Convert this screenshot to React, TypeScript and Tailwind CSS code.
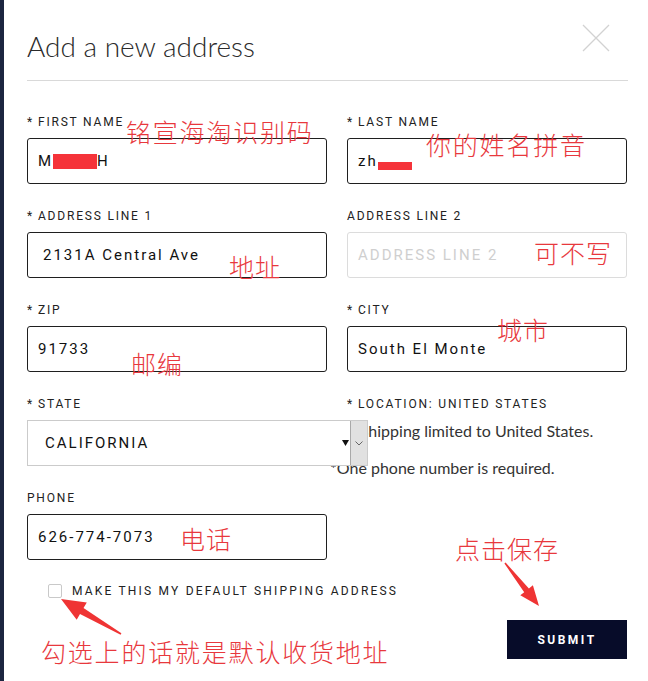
import type { ReactNode } from "react";

const labelCls =
  "h-[18px] mb-[7px] text-[12px] leading-[18px] tracking-[1.8px] text-[#222] whitespace-nowrap";
const boxCls =
  "h-[46px] border border-[#1f1f1f] rounded-[3px] flex items-center text-[15px] tracking-[2px] text-[#111] whitespace-nowrap";
const noteCls = "text-[16px] leading-[22px] text-[#333] whitespace-nowrap font-[family-name:Lato,sans-serif]";

const red = "#e8383d";

function Field({
  label,
  req,
  children,
  className = "",
}: {
  label: string;
  req?: boolean;
  children: ReactNode;
  className?: string;
}) {
  return (
    <div className={className}>
      <div className={labelCls}>
        {req && <span className="mr-[4px]">*</span>}
        {label}
      </div>
      {children}
    </div>
  );
}

// tapered arrow, tail -> tip
function arrow(tx: number, ty: number, px: number, py: number, headLen: number, headHalf: number, neck: number) {
  const len = Math.hypot(px - tx, py - ty);
  const dx = (px - tx) / len;
  const dy = (py - ty) / len;
  const nx = -dy;
  const ny = dx;
  const bx = px - dx * headLen;
  const by = py - dy * headLen;
  const pts = [
    [tx + nx * 0.8, ty + ny * 0.8],
    [bx + nx * neck, by + ny * neck],
    [bx + nx * headHalf, by + ny * headHalf],
    [px, py],
    [bx - nx * headHalf, by - ny * headHalf],
    [bx - nx * neck, by - ny * neck],
    [tx - nx * 0.8, ty - ny * 0.8],
  ];
  return pts.map((p) => p.map((v) => v.toFixed(1)).join(",")).join(" ");
}

const notes: { text: string; x: number; y: number; wide?: boolean }[] = [
  { text: "铭宣海淘识别码", x: 126, y: 119, wide: true },
  { text: "你的姓名拼音", x: 426, y: 132, wide: true },
  { text: "地址", x: 229, y: 254 },
  { text: "可不写", x: 534, y: 240 },
  { text: "城市", x: 497, y: 317 },
  { text: "邮编", x: 131, y: 351 },
  { text: "州省", x: 211, y: 433 },
  { text: "电话", x: 180, y: 526 },
  { text: "点击保存", x: 455, y: 536 },
  { text: "勾选上的话就是默认收货地址", x: 41, y: 639, wide: true },
];

export default function App() {
  return (
    <div className="relative w-[648px] h-[681px] overflow-hidden bg-white flex font-[family-name:Roboto,sans-serif]">
      <div className="w-[4px] shrink-0 bg-[#1c2540]" />
      <div className="flex-1 pl-[23px] pr-[21px]">
        {/* header */}
        <div className="flex justify-between items-start">
          <h1 className="pt-[29px] text-[28px] leading-[34px] font-light text-[#2b2b2b] font-[family-name:Lato,sans-serif]">
            Add a new address
          </h1>
          <svg className="mt-[24px] mr-[18px]" width="28" height="28" viewBox="0 0 28 28">
            <path d="M1 1 L27 27 M27 1 L1 27" stroke="#d2d2d2" strokeWidth="1.3" fill="none" />
          </svg>
        </div>
        <div className="mt-[17px] h-px w-[601px] bg-[#d9d9d9]" />

        <form className="mt-[32px] flex flex-col gap-[23px]">
          <div className="grid grid-cols-[300px_280px] gap-x-[20px]">
            <Field label="FIRST NAME" req>
              <div className={`${boxCls} pl-[10px]`}>
                M<span className="inline-block w-[44px] h-[15px] bg-[#f5333a] align-[-2px]" />H
              </div>
            </Field>
            <Field label="LAST NAME" req>
              <div className={`${boxCls} pl-[10px]`}>
                <span>
                  zh
                  <span className="inline-block w-[34px] h-[8px] bg-[#f5333a] align-[-4px]" />
                </span>
              </div>
            </Field>
          </div>

          <div className="grid grid-cols-[300px_280px] gap-x-[20px]">
            <Field label="ADDRESS LINE 1" req>
              <div className={`${boxCls} pl-[15px] tracking-[2.4px]`}>2131A Central Ave</div>
            </Field>
            <Field label="ADDRESS LINE 2">
              <div className={`${boxCls} pl-[10px] border-[#dcdcdc] text-[#cfcfcf]`}>ADDRESS LINE 2</div>
            </Field>
          </div>

          <div className="grid grid-cols-[300px_280px] gap-x-[20px]">
            <Field label="ZIP" req>
              <div className={`${boxCls} pl-[10px]`}>91733</div>
            </Field>
            <Field label="CITY" req>
              <div className={`${boxCls} pl-[10px]`}>South El Monte</div>
            </Field>
          </div>

          <div className="grid grid-cols-[300px_280px] gap-x-[20px]">
            <Field label="STATE" req>
              <div className="relative z-10 w-[341px] h-[46px] bg-white border border-[#cbcbcb] flex items-center text-[15px] tracking-[2px] text-[#111]">
                <span className="pl-[17px]">CALIFORNIA</span>
                <svg className="ml-auto mr-[1px]" width="7" height="6" viewBox="0 0 7 6">
                  <path d="M0 0 H7 L3.5 6 Z" fill="#111" />
                </svg>
                <div className="w-[17px] h-full bg-[#e1e1e1] border-l border-[#a9a9a9] flex items-center justify-center">
                  <svg width="8" height="5" viewBox="0 0 8 5">
                    <path d="M0.5 0.5 L4 4 L7.5 0.5" stroke="#666" strokeWidth="1" fill="none" />
                  </svg>
                </div>
              </div>
            </Field>
            <div className="h-[71px]">
              <div className={labelCls}>
                <span className="mr-[4px]">*</span>LOCATION: UNITED STATES
              </div>
              <div className={`${noteCls} pl-[6px]`}>*Shipping limited to United States.</div>
              <div className={`${noteCls} mt-[15px] ml-[-17px]`}>*One phone number is required.</div>
            </div>
          </div>

          <div className="grid grid-cols-[300px_280px] gap-x-[20px]">
            <Field label="PHONE">
              <div className={`${boxCls} pl-[10px]`}>626-774-7073</div>
            </Field>
          </div>
        </form>

        <label className="mt-[24px] ml-[21px] flex items-center gap-[10px]">
          <span className="w-[14px] h-[14px] border border-[#c9c9c9] rounded-[2px] bg-white" />
          <span className="text-[12px] leading-[14px] tracking-[2.2px] text-[#222]">
            MAKE THIS MY DEFAULT SHIPPING ADDRESS
          </span>
        </label>

        <div className="mt-[22px] flex justify-end pr-[1px]">
          <button
            type="button"
            className="w-[120px] h-[39px] bg-[#070c29] text-white text-[12px] font-bold tracking-[2.5px]"
          >
            SUBMIT
          </button>
        </div>
      </div>

      {/* red annotations drawn on the screenshot */}
      <div className="absolute inset-0 pointer-events-none">
        {notes.map((n) => (
          <span
            key={n.text}
            className={`absolute leading-none text-[25px] font-light whitespace-nowrap font-[family-name:'Noto_Sans_CJK_SC',sans-serif] ${
              n.wide ? "tracking-[1.8px]" : "tracking-[1px]"
            }`}
            style={{ left: n.x, top: n.y, color: red }}
          >
            {n.text}
          </span>
        ))}
        <svg className="absolute inset-0" width="648" height="681" viewBox="0 0 648 681">
          <polygon points={arrow(121, 634, 61, 599, 24, 10, 3.5)} fill="#ef3434" />
          <polygon points={arrow(505, 563, 539, 606, 20, 8, 3)} fill="#ef3434" />
        </svg>
      </div>
    </div>
  );
}
